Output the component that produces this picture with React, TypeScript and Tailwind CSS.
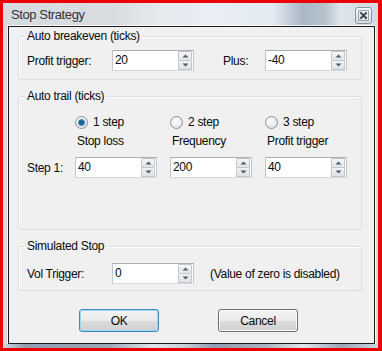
import React from "react";

function Arrow({ up }: { up?: boolean }) {
  return (
    <svg width="7" height="4" viewBox="0 0 7 4" className="block">
      {up ? (
        <polygon points="0.5,3.5 3.5,0.5 6.5,3.5" fill="#4b5b70" />
      ) : (
        <polygon points="0.5,0.5 6.5,0.5 3.5,3.5" fill="#4b5b70" />
      )}
    </svg>
  );
}

function Spin({ value }: { value: string }) {
  return (
    <div className="flex h-[21px] w-[82px] border border-[#abadb3] border-x-[#c3c6cc] border-b-[#d6dae0] bg-white">
      <span className="flex-1 pl-[2px] leading-[19px]">{value}</span>
      <div className="flex w-[15px] flex-col pr-[1px]">
        <div className="flex flex-1 items-center justify-center rounded-[1px] border border-[#c2c6cb] bg-gradient-to-b from-[#f6f6f6] to-[#e3e5e8]">
          <Arrow up />
        </div>
        <div className="flex flex-1 items-center justify-center rounded-[1px] border border-t-0 border-[#c2c6cb] bg-gradient-to-b from-[#f1f2f3] to-[#dfe2e6]">
          <Arrow />
        </div>
      </div>
    </div>
  );
}

function Radio({ checked }: { checked?: boolean }) {
  return (
    <div className="flex h-[13px] w-[13px] items-center justify-center rounded-full border border-[#8e9196] bg-[radial-gradient(circle_at_40%_35%,#ffffff,#d9dadc)]">
      {checked && (
        <div className="h-[7px] w-[7px] rounded-full bg-[radial-gradient(circle_at_50%_50%,#1a4f7e_0%,#2a6fa6_45%,#8fd2f4_100%)]" />
      )}
    </div>
  );
}

function Group({
  label,
  className,
  children,
}: {
  label: string;
  className: string;
  children: React.ReactNode;
}) {
  return (
    <div
      className={
        "relative ml-[9px] w-[344px] rounded-[3px] border border-[#d5dfe5] shadow-[inset_1px_1px_0_#ffffff] " +
        className
      }
    >
      <span className="absolute -top-[8px] left-[6px] bg-[#f0f0f0] px-[2px] leading-[14px]">
        {label}
      </span>
      {children}
    </div>
  );
}

function Button({ label, def }: { label: string; def?: boolean }) {
  return (
    <div
      className={
        "flex h-[23px] w-[80px] items-center justify-center rounded-[3px] border bg-[linear-gradient(to_bottom,#f3f3f3_0%,#ebebeb_50%,#dddddd_51%,#cfcfcf_100%)] " +
        (def
          ? "border-[#3c8cc4] shadow-[inset_0_0_0_1px_#9fd6f4]"
          : "border-[#707070] shadow-[inset_0_0_0_1px_#fbfbfb]")
      }
    >
      {label}
    </div>
  );
}

export default function App() {
  return (
    <div className="h-[351px] w-[382px] border-[3px] border-r-[4px] border-[#ec0000] bg-[#d9dfe6] font-['Liberation_Sans',Arial,sans-serif] text-[12px] tracking-[-0.3px] text-[#0a0a0a]">
      <div className="flex h-[345px] w-[375px] flex-col bg-[linear-gradient(to_right,#d6dbe1_0%,#d9dde2_30%,#e6e9ed_42%,#e9eef5_55%,#e4eaf1_72%,#a9b7c6_80%,#b7c3cf_86%,#dfe5eb_90%,#d3dae2_100%)]">
        {/* title bar */}
        <div className="flex h-[23px] items-start justify-between pl-[8px] pr-[6px]">
          <span className="pt-[4px] text-[13px] leading-[15px] tracking-[-0.4px] text-[#333]">
            Stop Strategy
          </span>
          <div className="mt-[4px] flex h-[17px] w-[17px] items-center justify-center rounded-[3px] border border-[#8a95a2] bg-gradient-to-b from-[#f7f9fb] to-[#d6dde5]">
            <svg width="11" height="11" viewBox="0 0 11 11">
              <rect x="0.5" y="0.5" width="10" height="10" fill="none" stroke="#9aa4ae" strokeWidth="1" />
              <path d="M3 3 L8 8 M8 3 L3 8" stroke="#3a3f46" strokeWidth="1.8" strokeLinecap="square" />
            </svg>
          </div>
        </div>
        {/* body */}
        <div className="flex h-[318px]">
          <div className="w-[5px]" />
          <div className="flex h-[318px] w-[367px] flex-col border border-[#1c1c1c] bg-[#f0f0f0] shadow-[0_0_0_1px_rgba(255,255,255,0.75)]">
            <Group label="Auto breakeven (ticks)" className="mt-[9px] h-[44px]">
              <div className="flex items-center pl-[8px] pt-[13px]">
                <span className="w-[85px]">Profit trigger:</span>
                <Spin value="20" />
                <span className="ml-[29px] w-[42px]">Plus:</span>
                <Spin value="-40" />
              </div>
            </Group>

            <Group label="Auto trail (ticks)" className="mt-[16px] h-[134px]">
              <div className="flex flex-col pt-[19px]">
                <div className="flex gap-[13px] pl-[56px]">
                  {[
                    ["1 step", true],
                    ["2 step", false],
                    ["3 step", false],
                  ].map(([t, c]) => (
                    <div key={t as string} className="flex w-[82px] items-center gap-[5px]">
                      <Radio checked={c as boolean} />
                      <span className="leading-[13px]">{t as string}</span>
                    </div>
                  ))}
                </div>
                <div className="mt-[5px] flex gap-[13px] pl-[56px]">
                  <span className="w-[82px] pl-[2px] leading-[14px]">Stop loss</span>
                  <span className="w-[82px] pl-[2px] leading-[14px]">Frequency</span>
                  <span className="w-[82px] pl-[2px] leading-[14px]">Profit trigger</span>
                </div>
                <div className="mt-[9px] flex items-center pl-[8px]">
                  <span className="w-[48px]">Step 1:</span>
                  <div className="flex gap-[13px]">
                    <Spin value="40" />
                    <Spin value="200" />
                    <Spin value="40" />
                  </div>
                </div>
              </div>
            </Group>

            <Group label="Simulated Stop" className="mt-[16px] h-[45px]">
              <div className="flex items-center pl-[8px] pt-[16px]">
                <span className="w-[85px]">Vol Trigger:</span>
                <Spin value="0" />
                <span className="ml-[16px]">(Value of zero is disabled)</span>
              </div>
            </Group>

            <div className="mt-[18px] flex gap-[59px] pl-[70px]">
              <Button label="OK" def />
              <Button label="Cancel" />
            </div>
          </div>
          <div className="w-[3px]" />
        </div>
        <div className="h-[4px] bg-[linear-gradient(to_right,#d3d9e0_0%,#8e9db0_6%,#9aa8b9_28%,#dfe4ea_40%,#c9d1db_48%,#8f9eb2_56%,#a6b3c2_70%,#e2e7ec_80%,#9aa8b9_90%,#cdd5de_100%)]" />
      </div>
    </div>
  );
}
